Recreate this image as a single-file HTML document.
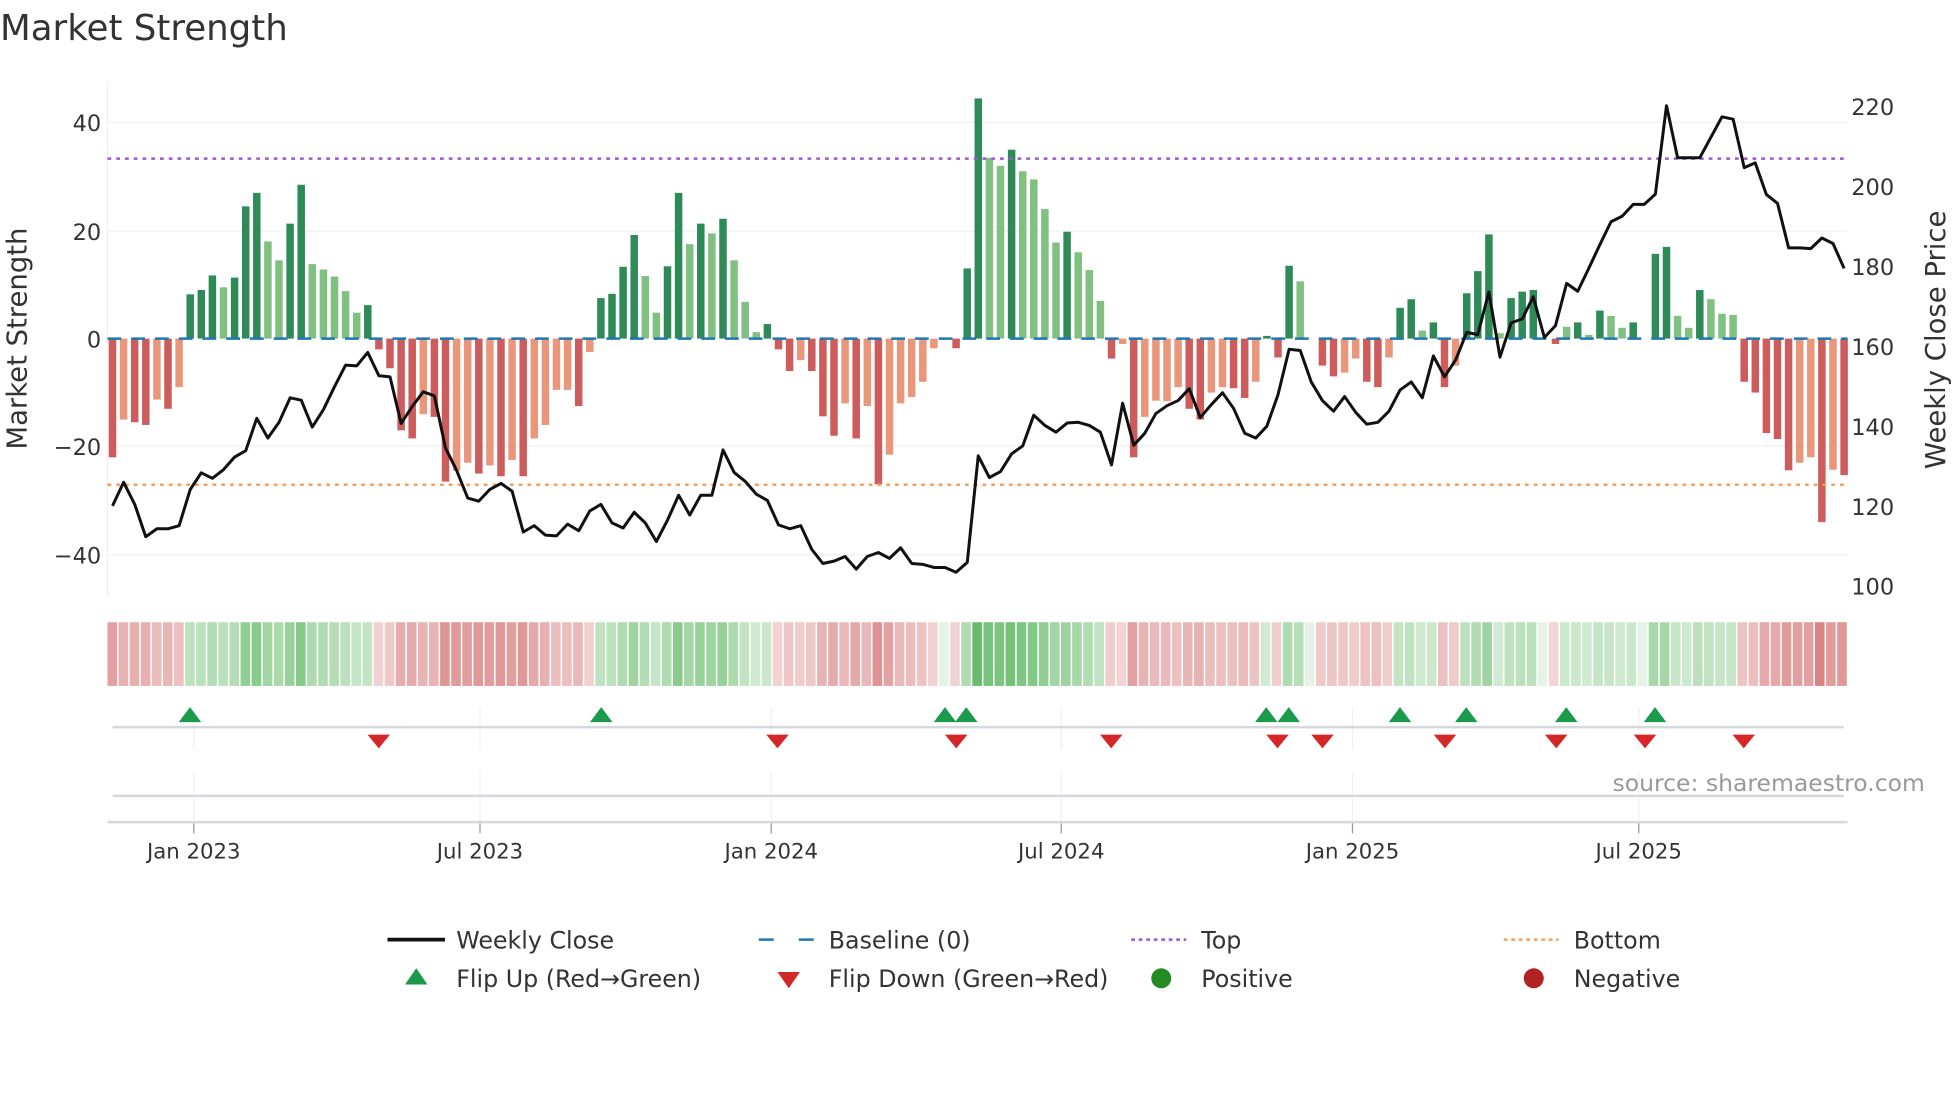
<!DOCTYPE html>
<html><head><meta charset="utf-8"><style>
html,body{margin:0;padding:0;background:#fff;}
svg{display:block;font-family:"DejaVu Sans","Liberation Sans",sans-serif;}
</style></head><body>
<svg id="s" width="1960" height="1102" viewBox="0 0 1568 882" preserveAspectRatio="none" xmlns="http://www.w3.org/2000/svg">
<rect width="1568" height="882" fill="#fff"/>
<text x="0" y="32" font-size="28.5" fill="#333">Market Strength</text>
<g stroke="#eef0f3" stroke-width="1">
<line x1="86" x2="1478" y1="98" y2="98"/><line x1="86" x2="1478" y1="185" y2="185"/>
<line x1="86" x2="1478" y1="357" y2="357"/><line x1="86" x2="1478" y1="444" y2="444"/>
</g>
<line x1="86" x2="86" y1="65" y2="478" stroke="#eef0f3"/>
<g font-size="18" fill="#333" text-anchor="end">
<text x="81" y="105">40</text><text x="81" y="192">20</text><text x="81" y="278">0</text>
<text x="81" y="364">−20</text><text x="81" y="451">−40</text></g>
<g font-size="18" fill="#333">
<text x="1481" y="92">220</text><text x="1481" y="156">200</text><text x="1481" y="220">180</text>
<text x="1481" y="284">160</text><text x="1481" y="348">140</text><text x="1481" y="412">120</text><text x="1481" y="476">100</text></g>
<text transform="translate(21,271) rotate(-90)" font-size="22" fill="#333" text-anchor="middle">Market Strength</text>
<text transform="translate(1556,272) rotate(-90)" font-size="22" fill="#333" text-anchor="middle">Weekly Close Price</text>
<g id="bars"></g>
<line x1="86" x2="1478" y1="271" y2="271" stroke="#1f77b4" stroke-width="2" stroke-dasharray="11,8"/>
<line x1="86" x2="1478" y1="127" y2="127" stroke="#9b59d0" stroke-width="2" stroke-dasharray="3,4"/>
<line x1="86" x2="1478" y1="388" y2="388" stroke="#f0a060" stroke-width="2" stroke-dasharray="3,4"/>
<polyline id="price" fill="none" stroke="#111" stroke-width="2.4" stroke-linejoin="round"/>
<g id="strip"></g>
<g stroke="#eef0f3"><line x1="155" x2="155" y1="566" y2="600"/><line x1="384" x2="384" y1="566" y2="600"/><line x1="617" x2="617" y1="566" y2="600"/><line x1="849" x2="849" y1="566" y2="600"/><line x1="1082" x2="1082" y1="566" y2="600"/><line x1="1311" x2="1311" y1="566" y2="600"/>
<line x1="155" x2="155" y1="618" y2="658"/><line x1="384" x2="384" y1="618" y2="658"/><line x1="617" x2="617" y1="618" y2="658"/><line x1="849" x2="849" y1="618" y2="658"/><line x1="1082" x2="1082" y1="618" y2="658"/><line x1="1311" x2="1311" y1="618" y2="658"/></g>
<line x1="90" x2="1475" y1="582" y2="582" stroke="#d5d8dc" stroke-width="2"/>
<line x1="90" x2="1475" y1="637" y2="637" stroke="#d5d8dc" stroke-width="2"/>
<line x1="86" x2="1478" y1="658" y2="658" stroke="#d5d8dc" stroke-width="2"/>
<g stroke="#999"><line x1="155" x2="155" y1="659" y2="667"/><line x1="384" x2="384" y1="659" y2="667"/><line x1="617" x2="617" y1="659" y2="667"/><line x1="849" x2="849" y1="659" y2="667"/><line x1="1082" x2="1082" y1="659" y2="667"/><line x1="1311" x2="1311" y1="659" y2="667"/></g>
<g id="flips"></g>
<text x="1290" y="633" font-size="18.8" fill="#999">source: sharemaestro.com</text>
<g font-size="17" fill="#333" text-anchor="middle">
<text x="155" y="687">Jan 2023</text><text x="384" y="687">Jul 2023</text><text x="617" y="687">Jan 2024</text>
<text x="849" y="687">Jul 2024</text><text x="1082" y="687">Jan 2025</text><text x="1311" y="687">Jul 2025</text></g>
<g font-size="19" fill="#333">
<line x1="310" x2="356" y1="752" y2="752" stroke="#111" stroke-width="3"/>
<text x="365" y="759">Weekly Close</text>
<line x1="607" x2="651" y1="752" y2="752" stroke="#1f77b4" stroke-width="2" stroke-dasharray="12,20"/>
<text x="663" y="759">Baseline (0)</text>
<line x1="905" x2="949" y1="752" y2="752" stroke="#9b59d0" stroke-width="2" stroke-dasharray="3,3"/>
<text x="961" y="759">Top</text>
<line x1="1203" x2="1247" y1="752" y2="752" stroke="#f0a060" stroke-width="2" stroke-dasharray="3,3"/>
<text x="1259" y="759">Bottom</text>
<polygon points="324,788 342,788 333,775" fill="#1a9a4a"/>
<text x="365" y="790">Flip Up (Red→Green)</text>
<polygon points="622,778 640,778 631,791" fill="#d62728"/>
<text x="663" y="790">Flip Down (Green→Red)</text>
<circle cx="929" cy="783" r="8" fill="#228b22"/>
<text x="961" y="790">Positive</text>
<circle cx="1227" cy="783" r="8" fill="#b22222"/>
<text x="1259" y="790">Negative</text>
</g>
</svg>
<script>
var NS="http://www.w3.org/2000/svg";
var B=[[-22,1],[-15,0],[-15.5,1],[-16,1],[-11.3,0],[-13,1],[-9,0],
[8.2,1],[9,1],[11.7,1],[9.5,0],[11.3,1],[24.5,1],[27,1],[18,0],[14.5,0],[21.3,1],[28.5,1],[13.8,0],[12.8,0],[11.5,0],[8.8,0],[4.8,0],[6.2,1],
[-2,1],[-5.5,1],[-17,1],[-18.5,1],[-14,0],[-14.5,1],[-26.5,1],[-24.5,0],[-23,0],[-25,1],[-23.5,0],[-25.5,1],[-22.5,0],[-25.5,1],[-18.5,0],[-16,0],[-9.5,0],[-9.5,0],[-12.5,1],[-2.5,0],
[7.5,1],[8.3,1],[13.3,1],[19.2,1],[11.6,0],[4.8,0],[13.4,1],[27,1],[17.5,0],[21.3,1],[19.5,0],[22.2,1],[14.5,0],[6.8,0],[1.2,0],[2.7,1],
[-2,1],[-6,1],[-4,0],[-6,1],[-14.4,1],[-18,1],[-12,0],[-18.5,1],[-12.5,0],[-27,1],[-21.5,0],[-12,0],[-10.8,0],[-8,0],[-1.8,0],[0,0],[-1.8,1],[13,1],[44.5,1],
[33.5,0],[32,0],[35,1],[31,0],[29.5,0],[24,0],[17.8,0],[19.8,1],[16,0],[12.7,0],[7,0],[-3.7,1],[-1,0],[-22,1],[-14.5,0],[-11.5,0],[-11.6,0],[-9,0],[-13,1],[-15,1],[-10,0],[-9,0],[-9.2,1],[-11,1],[-8,0],[0.5,1],[-3.5,1],[13.5,1],[10.6,0],[0,0],[-5,1],[-7,1],[-6.3,0],[-3.7,0],[-8,1],[-9,1],[-3.5,0],[5.7,1],[7.3,1],[1.5,0],[3,1],[-9,1],[-5,0],[8.4,1],[12.5,1],[19.3,1],[1,0],[7.5,1],[8.7,1],[9,1],[0,0],[-1,1],[2.2,0],[3,1],[0.7,0],[5.2,1],[4.2,0],[2,0],[3,1],[0,0],[15.7,1],[17,1],[4.2,0],[2,0],[9,1],[7.3,0],[4.6,0],[4.4,0],[-8,1],[-10,1],[-17.5,1],[-18.6,1],[-24.4,1],[-23,0],[-22,0],[-34,1],[-24.3,0],[-25.3,1]];
var P=[1282,1222,1278,1360,1340,1340,1332,1240,1198,1212,1190,1158,1142,1060,1110,1070,1008,1014,1082,1038,980,925,927,893,952,955,1073,1030,993,1003,1135,1192,1262,1270,1240,1225,1245,1348,1332,1356,1358,1328,1345,1295,1278,1325,1338,1298,1325,1372,1318,1255,1305,1255,1255,1140,1197,1220,1252,1268,1330,1340,1332,1392,1428,1422,1410,1442,1410,1400,1415,1388,1428,1430,1438,1438,1450,1425,1155,
1210,1195,1150,1130,1052,1078,1095,1072,1070,1078,1095,1178,1022,1128,1098,1048,1028,1015,985,1058,1025,995,1035,1098,1110,1080,1000,885,888,968,1015,1042,1005,1045,1075,1070,1042,988,968,1008,902,955,912,842,848,740,905,818,808,752,855,825,718,738,680,620,562,548,518,518,492,268,400,400,400,348,296,302,425,413,493,515,628,628,630,603,617,680];
var bars=document.getElementById("bars"),strip=document.getElementById("strip");
function mix(c,t){return "rgb("+c.map(function(v){return Math.round(255+(v-255)*t)}).join(",")+")";}
var pts=[];
B.forEach(function(b,i){
 var x=90+i*8.88,v=b[0],h=Math.abs(v)*4.32;
 if(h>0.3){var r=document.createElementNS(NS,"rect");
 r.setAttribute("x",x-3);r.setAttribute("width",6);
 r.setAttribute("y",v>0?271-h:271);r.setAttribute("height",h);
 r.setAttribute("fill",v>0?(b[1]?"#2e8b57":"#80c080"):(b[1]?"#cd5c5c":"#e9967a"));bars.appendChild(r);}
 var s=document.createElementNS(NS,"rect");
 s.setAttribute("x",86+i*8.87);s.setAttribute("width",7.7);s.setAttribute("y",498);s.setAttribute("height",51);
 var t=0.25+Math.min(1,Math.abs(v)/40)*0.6;
 s.setAttribute("fill",v>=0?mix([76,175,80],v==0?0.15:t):mix([205,92,92],t));strip.appendChild(s);
 if(i<P.length)pts.push(x.toFixed(1)+","+(P[i]/3.166).toFixed(1));
});
document.getElementById("price").setAttribute("points",pts.join(" "));
var fl=document.getElementById("flips"),h="";
[152,481,756,773,1013,1031,1120,1173,1253,1324].forEach(function(x){h+='<polygon points="'+(x-9)+',578 '+(x+9)+',578 '+x+',566" fill="#1a9a4a"/>';});
[303,622,765,889,1022,1058,1156,1245,1316,1395].forEach(function(x){h+='<polygon points="'+(x-9)+',588 '+(x+9)+',588 '+x+',599" fill="#d62728"/>';});
fl.innerHTML=h;
</script>
</body></html>
